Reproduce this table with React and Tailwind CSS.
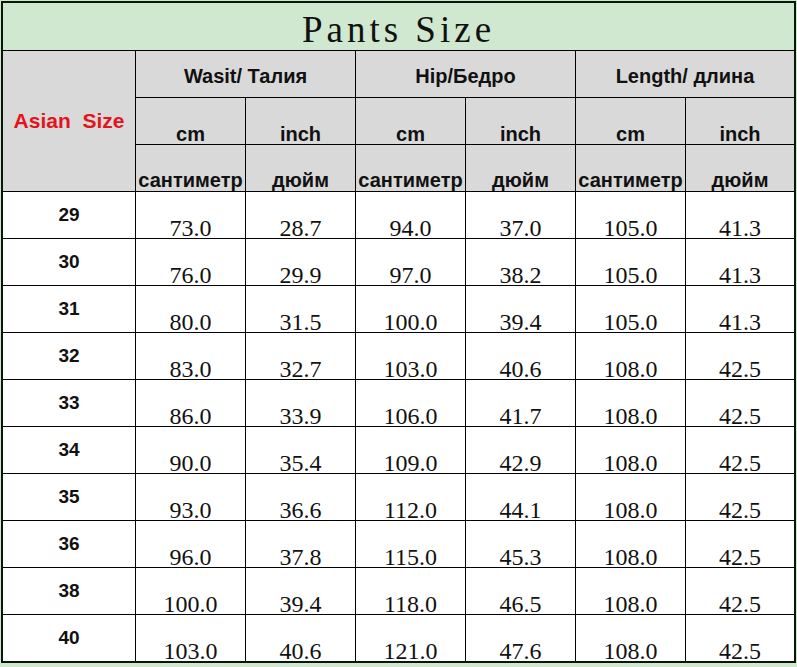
import React from 'react';

const rows = [
    ['29', '73.0', '28.7', '94.0', '37.0', '105.0', '41.3'],
    ['30', '76.0', '29.9', '97.0', '38.2', '105.0', '41.3'],
    ['31', '80.0', '31.5', '100.0', '39.4', '105.0', '41.3'],
    ['32', '83.0', '32.7', '103.0', '40.6', '108.0', '42.5'],
    ['33', '86.0', '33.9', '106.0', '41.7', '108.0', '42.5'],
    ['34', '90.0', '35.4', '109.0', '42.9', '108.0', '42.5'],
    ['35', '93.0', '36.6', '112.0', '44.1', '108.0', '42.5'],
    ['36', '96.0', '37.8', '115.0', '45.3', '108.0', '42.5'],
    ['38', '100.0', '39.4', '118.0', '46.5', '108.0', '42.5'],
    ['40', '103.0', '40.6', '121.0', '47.6', '108.0', '42.5'],
];

const groups = ['Wasit/ Талия', 'Hip/Бедро', 'Length/ длина'];

const sans = "font-['Liberation_Sans',Arial,sans-serif]";
const serif = "font-['Liberation_Serif','Times_New_Roman',serif]";

const App = () => {
    return (
        <div className="w-[797px] h-[667px] bg-[#cfe8cf] pt-px pl-px overflow-hidden">
            <div className="w-[795px] border-2 border-[#0b160b]">
                {/* Title */}
                <div className={`h-[47px] flex items-center justify-center pt-[6px] bg-[#cfe8cf] text-[37px] tracking-[4px] text-[#111] ${serif}`}>
                    Pants Size
                </div>

                {/* Table */}
                <div className="grid grid-cols-[132px_repeat(5,109px)_108px] grid-rows-[repeat(13,46px)] gap-px bg-black border-t border-black">
                    <div className={`row-span-3 bg-[#d9d9d9] flex items-center justify-center text-[21px] font-bold text-[#e3141c] whitespace-pre ${sans}`}>
                        {'Asian  Size'}
                    </div>
                    {groups.map(g => (
                        <div key={g} className={`col-span-2 bg-[#d9d9d9] flex items-center justify-center pt-[3px] text-[20px] font-bold text-[#111] ${sans}`}>
                            {g}
                        </div>
                    ))}
                    {[0, 1, 2].flatMap(() => ['cm', 'inch']).map((u, i) => (
                        <div key={`u-${i}`} className={`bg-[#d9d9d9] flex items-end justify-center leading-[19px] text-[20px] font-bold text-[#111] ${sans}`}>
                            {u}
                        </div>
                    ))}
                    {[0, 1, 2].flatMap(() => ['сантиметр', 'дюйм']).map((u, i) => (
                        <div key={`r-${i}`} className={`bg-[#d9d9d9] flex items-end justify-center leading-[21px] text-[20px] font-bold text-[#111] whitespace-nowrap ${sans}`}>
                            {u}
                        </div>
                    ))}

                    {rows.map(r => (
                        <React.Fragment key={r[0]}>
                            <div className={`bg-white flex items-center justify-center text-[19px] font-bold text-[#111] ${sans}`}>
                                {r[0]}
                            </div>
                            {r.slice(1).map((v, i) => (
                                <div key={i} className={`bg-white flex items-end justify-center leading-[20px] text-[24px] text-[#111] ${serif}`}>
                                    {v}
                                </div>
                            ))}
                        </React.Fragment>
                    ))}
                </div>
            </div>
        </div>
    );
};

export default App;
